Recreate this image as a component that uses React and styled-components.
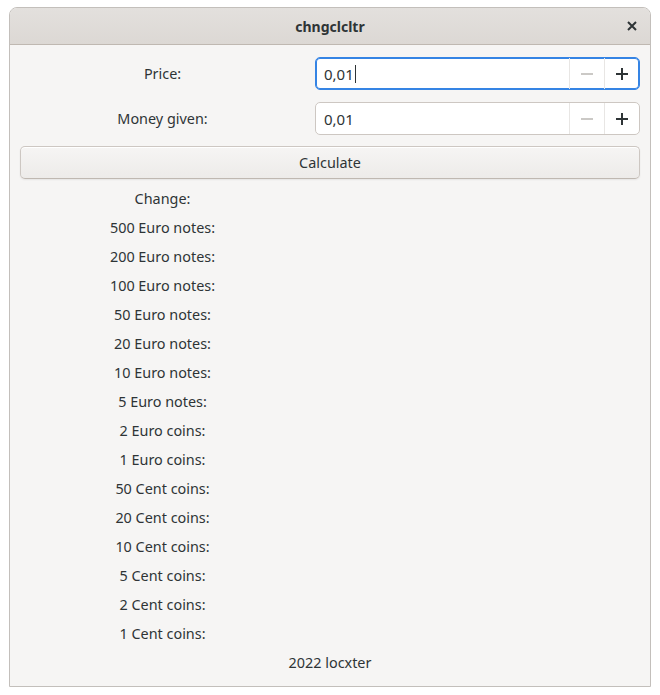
import React from 'react'
import styled, { createGlobalStyle, css } from 'styled-components'

const GlobalStyle = createGlobalStyle`
  html, body {
    margin: 0;
    padding: 0;
    background: #ffffff;
  }
  body {
    font-family: 'Noto Sans', 'Open Sans', sans-serif;
    font-size: 14.4px;
    color: #2e3436;
  }
`

const Window = styled.div`
  margin: 7px 9px 8px 9px;
  border: 1px solid #c3bfbb;
  border-radius: 8px 8px 0 0;
  background: #f6f5f4;
  overflow: hidden;
`

const HeaderBar = styled.header`
  position: relative;
  display: flex;
  align-items: center;
  justify-content: center;
  height: 36px;
  background: linear-gradient(to bottom, #e3e0dd, #dcd8d4);
  border-bottom: 1px solid #bfb8b1;
`

const Title = styled.h1`
  margin: 0;
  font-size: 14px;
  font-weight: 700;
  color: #2e3436;
`

const CloseButton = styled.button`
  position: absolute;
  right: 5px;
  top: 5px;
  width: 26px;
  height: 26px;
  display: flex;
  align-items: center;
  justify-content: center;
  border: none;
  background: transparent;
  padding: 0;
`

const Content = styled.main`
  padding: 12px 10px 9px 10px;
  display: flex;
  flex-direction: column;
`

const FormGrid = styled.div`
  display: grid;
  grid-template-columns: 285px 1fr;
  column-gap: 10px;
  row-gap: 12px;
`

const FieldLabel = styled.label`
  display: flex;
  align-items: center;
  justify-content: center;
`

const SpinBox = styled.div`
  display: flex;
  height: 31px;
  background: #ffffff;
  border: 1px solid #cdc7c2;
  border-radius: 5px;
  ${p =>
    p.focused &&
    css`
      border-color: #3584e4;
      box-shadow: inset 0 0 0 1px #3584e4;
    `}
`

const SpinEntry = styled.div`
  flex: 1;
  display: flex;
  align-items: center;
  padding-left: 8px;
  font-size: 15px;
`

const Caret = styled.span`
  display: inline-block;
  width: 1px;
  height: 18px;
  background: #2e3436;
  margin-left: 1px;
`

const SpinButton = styled.button`
  width: 35px;
  border: none;
  border-left: 1px solid #e8e6e4;
  background: transparent;
  display: flex;
  align-items: center;
  justify-content: center;
  padding: 0;
`

const CalcButton = styled.button`
  height: 33px;
  margin-top: 11px;
  border: 1px solid #cdc7c2;
  border-bottom-color: #bfb8b1;
  border-radius: 5px;
  background: linear-gradient(to bottom, #f6f5f4, #edebe9);
  box-shadow: inset 0 1px #ffffff, 0 1px 2px rgba(0, 0, 0, 0.07);
  font-family: inherit;
  font-size: 14.4px;
  color: #2e3436;
`

const ResultGrid = styled.div`
  display: grid;
  grid-template-columns: 285px 1fr;
  column-gap: 10px;
  margin-top: 5px;
`

const ResultLabel = styled.div`
  height: 29px;
  display: flex;
  align-items: center;
  justify-content: center;
`

const ResultValue = styled.div`
  height: 29px;
`

const Footer = styled.footer`
  height: 29px;
  display: flex;
  align-items: center;
  justify-content: center;
`

const Minus = ({ color }) => (
  <svg width="12" height="12" viewBox="0 0 12 12">
    <rect x="0" y="5" width="12" height="2" fill={color} />
  </svg>
)

const Plus = ({ color }) => (
  <svg width="12" height="12" viewBox="0 0 12 12">
    <rect x="0" y="5" width="12" height="2" fill={color} />
    <rect x="5" y="0" width="2" height="12" fill={color} />
  </svg>
)

const CloseIcon = () => (
  <svg width="10" height="10" viewBox="0 0 10 10">
    <path d="M1 1 L9 9 M9 1 L1 9" stroke="#2e3436" strokeWidth="2" />
  </svg>
)

const SpinField = ({ value, focused }) => (
  <SpinBox focused={focused}>
    <SpinEntry>
      {value}
      {focused && <Caret />}
    </SpinEntry>
    <SpinButton>
      <Minus color="#cbc9c6" />
    </SpinButton>
    <SpinButton>
      <Plus color="#2e3436" />
    </SpinButton>
  </SpinBox>
)

const results = [
  'Change:',
  '500 Euro notes:',
  '200 Euro notes:',
  '100 Euro notes:',
  '50 Euro notes:',
  '20 Euro notes:',
  '10 Euro notes:',
  '5 Euro notes:',
  '2 Euro coins:',
  '1 Euro coins:',
  '50 Cent coins:',
  '20 Cent coins:',
  '10 Cent coins:',
  '5 Cent coins:',
  '2 Cent coins:',
  '1 Cent coins:',
]

const App = () => (
  <>
    <GlobalStyle />
    <Window>
      <HeaderBar>
        <Title>chngclcltr</Title>
        <CloseButton>
          <CloseIcon />
        </CloseButton>
      </HeaderBar>
      <Content>
        <FormGrid>
          <FieldLabel>Price:</FieldLabel>
          <SpinField value="0,01" focused />
          <FieldLabel>Money given:</FieldLabel>
          <SpinField value="0,01" />
        </FormGrid>
        <CalcButton>Calculate</CalcButton>
        <ResultGrid>
          {results.map(label => (
            <React.Fragment key={label}>
              <ResultLabel>{label}</ResultLabel>
              <ResultValue />
            </React.Fragment>
          ))}
        </ResultGrid>
        <Footer>2022 locxter</Footer>
      </Content>
    </Window>
  </>
)

export default App
